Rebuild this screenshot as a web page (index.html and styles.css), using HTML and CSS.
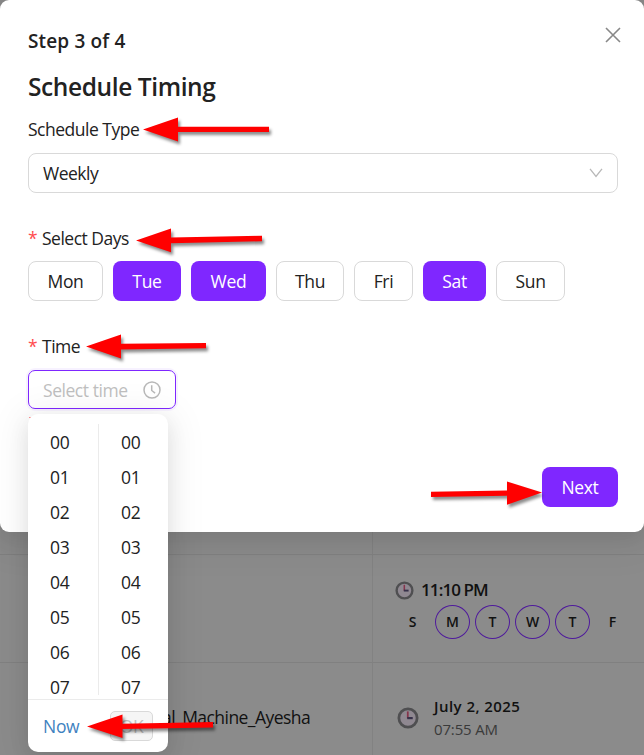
FILE: index.html
```html
<!DOCTYPE html>
<html lang="en">
<head>
<meta charset="utf-8">
<title>Schedule Timing</title>
<link rel="stylesheet" href="styles.css">
</head>
<body>
<svg class="defs" width="0" height="0" aria-hidden="true">
  <symbol id="clock" viewBox="0 0 20 20">
    <circle cx="10" cy="10" r="8.3" fill="#8f8891" stroke="#4f4f51" stroke-width="2.5"/>
    <path d="M9.8 4v6.3" stroke="#86344c" stroke-width="1.6"/>
    <path d="M9.3 10.1h5" stroke="#37314a" stroke-width="2"/>
  </symbol>
</svg>
<div class="screen">
  <div class="table">
    <div class="cell"></div><div class="cell"></div>
    <div class="cell"></div>
    <div class="cell run">
      <div class="run-time"><svg class="clock-s"><use href="#clock"/></svg><span>11:10 PM</span></div>
      <div class="week"><span>S</span><span class="on">M</span><span class="on">T</span><span class="on">W</span><span class="on">T</span><span>F</span></div>
    </div>
    <div class="cell name"><span>al_Machine_Ayesha</span></div>
    <div class="cell once">
      <svg class="clock-l"><use href="#clock"/></svg>
      <div><div class="date">July 2, 2025</div><div class="hour">07:55 AM</div></div>
    </div>
  </div>

  <main class="modal">
    <header class="head">
      <span class="step">Step 3 of 4</span>
      <svg class="close" viewBox="0 0 16 16"><path d="M1 1l14 14M15 1L1 15"/></svg>
    </header>
    <h1 class="title">Schedule Timing</h1>
    <div class="label type-label">Schedule Type</div>
    <div class="select"><span>Weekly</span><svg class="chevron" viewBox="0 0 14 10"><path d="M1 .8l6 7.7L13 .8"/></svg></div>
    <div class="label days-label"><i>*</i><span>Select Days</span></div>
    <div class="days">
      <button class="mon">Mon</button><button class="tue on">Tue</button><button class="wed on">Wed</button><button class="thu">Thu</button><button class="fri">Fri</button><button class="sat on">Sat</button><button class="sun">Sun</button>
    </div>
    <div class="label time-label"><i>*</i><span>Time</span></div>
    <div class="picker">
      <span>Select time</span>
      <svg class="clock-outline" viewBox="0 0 18 18"><circle cx="9" cy="9" r="8"/><path d="M8.7 4.3v5.2l3.4 2.7"/></svg>
      <div class="dropdown">
        <div class="columns">
          <div class="col"><span>00</span><span>01</span><span>02</span><span>03</span><span>04</span><span>05</span><span>06</span><span>07</span></div>
          <div class="col"><span>00</span><span>01</span><span>02</span><span>03</span><span>04</span><span>05</span><span>06</span><span>07</span></div>
        </div>
        <div class="foot"><span class="now">Now</span><span class="ok">OK</span></div>
      </div>
    </div>
    <div class="actions"><button class="next on">Next</button></div>
  </main>

  <svg class="arrows" viewBox="0 0 644 755">
    <path d="M143 129.500L178 117.500V126.800H269V132H178V141.500Z"/>
    <path d="M136 240.500L171 228.500V237.500L262 235.800V241.300L171 243.300V252.300Z"/>
    <path d="M86 346.500L121 334.500V343.800L206 343V348.300L121 349.500V358.500Z"/>
    <path d="M542 492.500L507 481.500V490.500L431 491.800V497L507 495.800V504.800Z"/>
    <path d="M87 726.500L122.500 714.500V723.800L213 722V727.500L122.500 729V738Z"/>
  </svg>
</div>
</body>
</html>
```
FILE: styles.css
```css
* { box-sizing: border-box; }
body {
  margin: 0;
  background: #8b8b8b;
  font-family: "Open Sans", "Noto Sans", sans-serif;
  font-size: 17.5px;
  color: #222;
}
button { font: inherit; color: inherit; padding: 0; }
svg { display: block; flex: none; }
.defs { position: absolute; }
.screen { position: relative; width: 644px; height: 755px; overflow: hidden; }

.table {
  position: absolute;
  inset: 0;
  display: grid;
  grid-template-columns: 373px 271px;
  grid-template-rows: 555px 108px 108px;
  background: #8b8b8b;
  color: #111;
}
.cell { border-bottom: 1px solid #808080; }
.cell:nth-child(odd) { border-right: 1px solid #828282; }
.run { padding: 20px 0 0 22px; }
.run-time { display: flex; align-items: center; gap: 7px; height: 30px; font-size: 17px; font-weight: 600; letter-spacing: -.9px; }
.run-time span { margin-top: -2px; }
.clock-s { width: 19px; height: 19px; }
.week { display: flex; gap: 5px; }
.week span {
  width: 35px; height: 34px;
  border: 1px solid transparent;
  border-radius: 50%;
  text-align: center;
  line-height: 32px;
  font-size: 14px;
  font-weight: 600;
}
.week .on { border-color: #4f1a9c; }
.name { display: flex; align-items: center; padding: 0 0 0 162px; letter-spacing: -.55px; }
.once { display: flex; align-items: center; gap: 15px; padding: 2px 0 0 24px; }
.clock-l { width: 22px; height: 22px; }
.date { font-size: 15px; font-weight: 600; line-height: 23px; letter-spacing: .45px; }
.hour { font-size: 15px; line-height: 23px; color: #3a3a3a; letter-spacing: -.15px; }

.modal {
  position: relative;
  height: 532px;
  padding: 27px 26px 0 28px;
  border-radius: 9px;
  background: #fff;
  box-shadow: 0 8px 20px rgba(0,0,0,.08), 0 4px 40px 12px rgba(0,0,0,.05);
}
.head { display: flex; justify-content: space-between; height: 28px; }
.step { font-size: 19px; line-height: 28px; font-weight: 600; letter-spacing: .15px; }
.close { width: 16px; height: 16px; margin-right: -3px; stroke: #888; stroke-width: 1.6; }
.title { margin: 16px 0 0; font-size: 24.5px; line-height: 32px; font-weight: 600; letter-spacing: -.4px; }
.label { display: flex; gap: 6px; height: 28px; line-height: 26px; letter-spacing: -.5px; }
.label i { width: 8px; font-style: normal; color: #ff4d4f; }
.type-label { margin-top: 13px; }
.select {
  display: flex; align-items: center; justify-content: space-between;
  height: 40px; margin-top: 9px; padding: 0 14px;
  border: 1px solid #d9d9d9; border-radius: 8px;
  letter-spacing: -.5px;
}
.chevron { width: 14px; height: 10px; fill: none; stroke: #b8b8b8; stroke-width: 1.3; }
.days-label { margin-top: 32px; }
.days { display: flex; gap: 10px; margin-top: 8px; }
.days button { height: 40px; border: 1px solid #d9d9d9; border-radius: 8px; background: #fff; letter-spacing: -.3px; }
.days button.on, .next.on { border: 0; background: #7f27ff; color: #fff; }
.mon, .wed { width: 75px; }
.tue, .thu { width: 68px; }
.fri { width: 59px; }
.sat { width: 63px; }
.sun { width: 69px; }
.time-label { margin-top: 32px; }
.picker {
  position: relative;
  display: flex; align-items: center; justify-content: space-between;
  width: 148px; height: 39px; margin-top: 9px; padding: 0 14px;
  border: 1px solid #7f27ff; border-radius: 7px;
  box-shadow: 0 0 0 2px rgba(127,39,255,.06);
  color: #bfbfbf;
  letter-spacing: -.45px;
}
.picker::after {
  content: "";
  position: absolute;
  left: 0; top: 46px;
  width: 2px; height: 1px;
  background: #ff8f90;
  z-index: 1;
}
.clock-outline { width: 18px; height: 18px; fill: none; stroke: #b8b8b8; stroke-width: 1.5; }
.dropdown {
  position: absolute;
  z-index: 2;
  top: 43px; left: -1px;
  width: 140px; height: 338px;
  border-radius: 10px;
  background: #fff;
  box-shadow: 0 8px 20px rgba(0,0,0,.09), 0 4px 34px 10px rgba(0,0,0,.05);
  color: #222;
  letter-spacing: -.3px;
}
.columns { display: flex; height: 285px; padding-top: 10px; }
.col { width: 70px; height: 271px; padding: 1px 0 0 22px; }
.col + .col { border-left: 1px solid #ebebeb; }
.col span { display: block; height: 35px; line-height: 35px; }
.foot { display: flex; justify-content: space-between; align-items: center; height: 53px; padding: 0 15px; border-top: 1px solid #ebebeb; }
.now { color: #3f82bf; }
.ok { width: 43px; height: 30px; border: 1px solid #d9d9d9; border-radius: 5px; background: #f5f5f5; color: #bfbfbf; text-align: center; line-height: 28px; }
.actions { display: flex; justify-content: flex-end; margin-top: 58px; }
.next { width: 76px; height: 40px; border-radius: 8px; letter-spacing: -.4px; }
.arrows { position: absolute; inset: 0; z-index: 3; width: 644px; height: 755px; fill: #f00; filter: drop-shadow(2px 3px 1.5px rgba(0,0,0,.45)); pointer-events: none; }
```
